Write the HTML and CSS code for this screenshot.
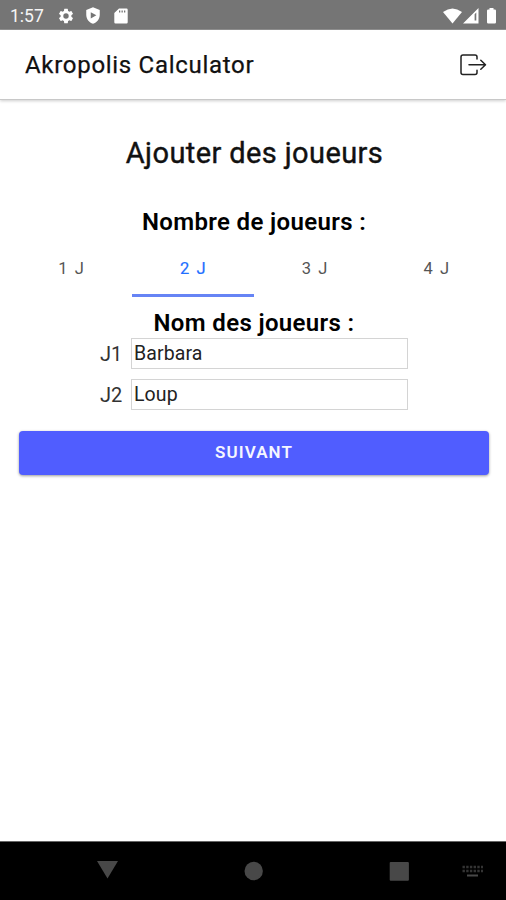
FILE: index.html
```html
<!DOCTYPE html>
<html lang="fr">
<head>
<meta charset="utf-8">
<title>Akropolis Calculator</title>
<link rel="stylesheet" href="styles.css">
</head>
<body>
<div class="status">
  <span class="clock">1:57</span>
  <svg class="gear" width="18" height="18" viewBox="0 0 24 24"><path fill="#fff" d="M19.14 12.94c.04-.3.06-.61.06-.94s-.02-.64-.07-.94l2.03-1.58a.49.49 0 0 0 .12-.61l-1.92-3.32a.49.49 0 0 0-.59-.22l-2.39.96a7 7 0 0 0-1.62-.94l-.36-2.54A.48.48 0 0 0 13.92 2.400h-3.840a.48.48 0 0 0-.47.41l-.36 2.540c-.59.24-1.130.57-1.620.94l-2.390-.96a.48.48 0 0 0-.59.22L2.740 8.870a.48.48 0 0 0 .12.61l2.030 1.580c-.05.3-.09.63-.09.94s.02.64.07.94l-2.030 1.580a.49.49 0 0 0-.12.61l1.920 3.320c.12.22.37.29.59.22l2.390-.96c.5.38 1.030.7 1.620.94l.36 2.540c.05.24.24.41.48.41h3.840c.24 0 .44-.17.47-.41l.36-2.540c.59-.24 1.130-.56 1.620-.94l2.390.96c.22.08.47 0 .59-.22l1.920-3.320a.48.48 0 0 0-.12-.61zM12 15.600a3.600 3.600 0 1 1 0-7.200 3.600 3.600 0 0 1 0 7.200z"/></svg>
  <svg class="shield" width="18" height="19" viewBox="0 0 24 24"><path fill="#fff" fill-rule="evenodd" d="M12 1L3 4.500V11c0 5.600 3.800 10.500 9 12 5.200-1.500 9-6.400 9-12V4.500zM9 7.500l7.500 4.300L9 16z"/></svg>
  <svg class="card" width="14" height="16" viewBox="0 0 14 16"><path fill="#fff" fill-rule="evenodd" d="M5 .5h7.500q1.200 0 1.200 1.200v12.600q0 1.200-1.200 1.200h-11Q.3 15.500.3 14.300V5zM5 2.500v2h1.300v-2zm2.500 0v2h1.300v-2zm2.500 0v2h1.300v-2z"/></svg>
  <span class="spacer"></span>
  <svg class="signals" width="56" height="18" viewBox="0 0 56 18"><g fill="#fff"><path d="M0 5Q9.500-2 19 5L9.500 16.500z"/><path fill-rule="evenodd" d="M35.500 1v15.500H20zM33.300 5.500v8h-1.700V7.300z"/><path d="M46.500 1h4v1.500h1.300q1.200 0 1.200 1.200v11.600q0 1.200-1.200 1.200h-6.600q-1.200 0-1.200-1.200V3.700q0-1.200 1.200-1.200h1.300z"/></g></svg>
</div>
<header class="toolbar">
  <div class="title">Akropolis Calculator</div>
  <svg width="28" height="24" viewBox="0 0 28 24" fill="none" stroke="#222" stroke-width="1.5" stroke-linecap="round" stroke-linejoin="round"><path d="M18 6V4q0-2-2-2H4Q2 2 2 4v15.500q0 2 2 2h12q2 0 2-2v-2.200M10 11.700h16M21.800 7.200l4.700 4.500-4.700 4.500"/></svg>
</header>
<main>
  <h1>Ajouter des joueurs</h1>
  <h2>Nombre de joueurs :</h2>
  <nav class="tabs">
    <div class="tab">1 J</div>
    <div class="tab active">2 J</div>
    <div class="tab">3 J</div>
    <div class="tab">4 J</div>
  </nav>
  <h2 class="names">Nom des joueurs :</h2>
  <div class="row"><label for="j1">J1</label><input id="j1" value="Barbara"></div>
  <div class="row"><label for="j2">J2</label><input id="j2" value="Loup"></div>
  <button type="button">SUIVANT</button>
</main>
<footer class="navbar">
  <svg width="506" height="58" viewBox="0 0 506 58"><g fill="#484848"><path d="M97 19h21L107.500 36.500z"/><circle cx="253.700" cy="29" r="9.200"/><rect x="389.700" y="20" width="19.200" height="18.700" rx="1"/></g><g stroke="#343434" fill="none"><path stroke-width="2.600" stroke-dasharray="2.400 1.300" d="M462.500 25H483M462.500 29H483"/><path stroke="#484848" stroke-width="2" d="M467 33.500h11"/></g></svg>
</footer>
</body>
</html>
```
FILE: styles.css
```css
* { box-sizing: border-box; }
body {
  margin: 0;
  height: 900px;
  display: flex;
  flex-direction: column;
  overflow: hidden;
  background: #fff;
  color: #111;
  font-family: Roboto, sans-serif;
}
svg { display: block; flex: none; }
.status {
  height: 30px;
  flex: none;
  display: flex;
  align-items: center;
  padding: 2px 7px 0 10px;
  background: #757575;
  border-bottom: 1px solid #929292;
}
.clock { width: 47px; color: #f5f5f5; font-size: 17.5px; }
.shield { margin-left: 9px; }
.card { margin-left: 12px; }
.spacer { flex: 1; }
.toolbar {
  height: 70px;
  flex: none;
  display: flex;
  align-items: center;
  justify-content: space-between;
  padding: 0 19px 0 25px;
  border-bottom: 1px solid #c8c8c8;
  box-shadow: 0 1px 3px #0003;
}
.title { font-size: 24px; font-weight: 400; letter-spacing: .7px; line-height: 30px; -webkit-text-stroke: .25px #111; }
main { flex: 1; display: flex; flex-direction: column; align-items: center; }
h1 { margin: 34px 0 0; padding-left: 3px; font-size: 29px; line-height: 38px; font-weight: 400; letter-spacing: .4px; -webkit-text-stroke: .4px #111; }
h2 { margin: 35px 0 0; padding-left: 2px; font-size: 24px; line-height: 31px; font-weight: 600; letter-spacing: .35px; color: #000; }
.tabs { display: flex; width: 487px; height: 59px; margin-left: 2px; }
.tab {
  flex: 1;
  padding: 21px 0 0 1px;
  border-bottom: 3px solid transparent;
  text-align: center;
  font-size: 16.5px;
  line-height: 20px;
  letter-spacing: 1.6px;
  color: #555;
}
.active { color: #226fff; border-color: #6684f5; -webkit-text-stroke: .2px #226fff; }
.names { margin-top: 11px; }
.row { display: flex; width: 308px; height: 31px; margin: 0 0 10px 2px; align-items: center; color: #333; }
.names + .row { margin-top: -1px; }
.row label { width: 31px; font-size: 20px; }
.row input {
  width: 277px;
  height: 31px;
  padding: 0 3px 0 2px;
  border: 1px solid #d4d4d4;
  font: 19.5px Roboto, sans-serif;
  letter-spacing: .1px;
  color: #222;
  outline: 0;
}
button {
  width: 470px;
  height: 44px;
  margin: 11px 0 0 2px;
  border: 0;
  border-radius: 4px;
  padding: 0 0 2px;
  background: #505dff;
  box-shadow: 0 1px 3px #0006;
  color: #f5f6ff;
  font: 600 17px Roboto, sans-serif;
  letter-spacing: 1.1px;
}
.navbar { height: 59px; flex: none; background: #000; border-top: 1px solid #666; }
```
